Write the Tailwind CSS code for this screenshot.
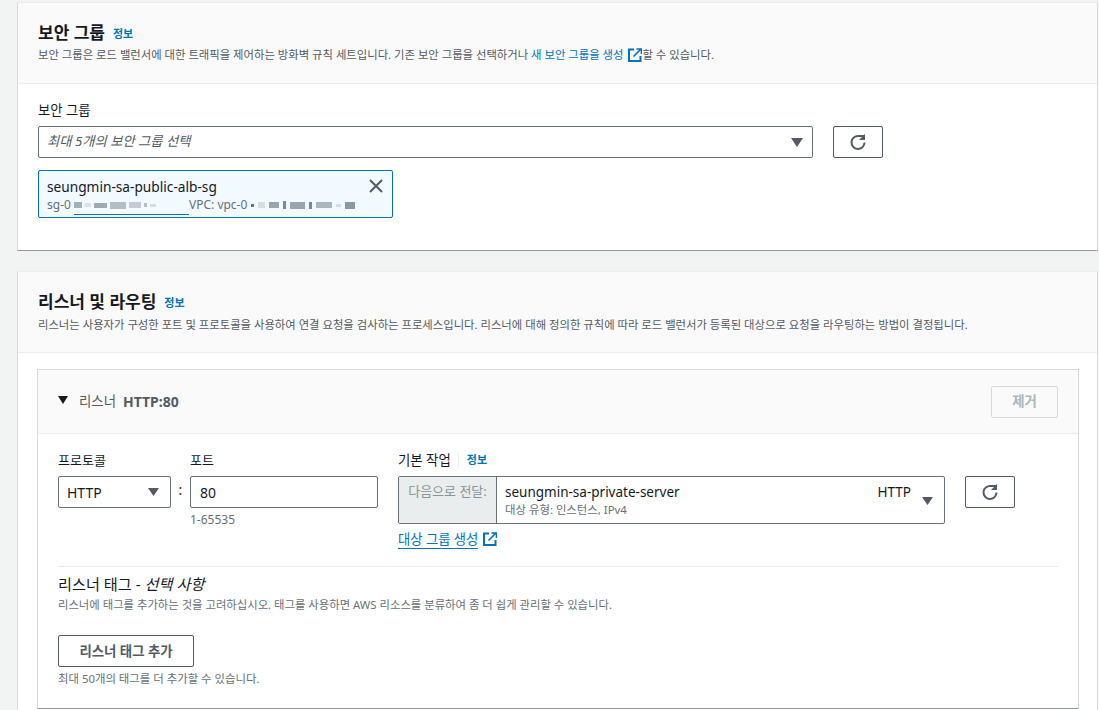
<!DOCTYPE html>
<html lang="ko">
<head>
    <meta charset="UTF-8">
    <title>보안 그룹 - 리스너 및 라우팅</title>
    <script src="https://cdn.jsdelivr.net/npm/@tailwindcss/browser@4"></script>
</head>
<body class="h-[710px] overflow-hidden bg-[#f2f3f3] text-[#16191f] font-['Noto_Sans','Noto_Sans_CJK_KR',sans-serif]">

    <!-- 보안 그룹 -->
    <section class="mt-[2px] ml-[17px] mr-[1px] h-[249px] bg-white border-l border-t border-r border-b border-l-[#d5dbdb] border-r-[#d5dbdb] border-t-[#eaeded] border-b-[#8d9a9b]">
        <div class="h-[81px] bg-[#fafafa] border-b border-[#eaeded] pl-[20px] pt-[15px]">
            <div class="flex items-center h-[30px]">
                <h2 class="text-[17px] leading-[30px] font-bold">보안 그룹</h2>
                <a class="ml-[8px] mt-[2px] text-[11px] font-bold text-[#0073bb]">정보</a>
            </div>
            <p class="text-[11.35px] leading-[18px] text-[#545b64] flex items-center mt-[-2px]">
                보안 그룹은 로드 밸런서에 대한 트래픽을 제어하는 방화벽 규칙 세트입니다. 기존 보안 그룹을 선택하거나&nbsp;<a class="text-[#0073bb]">새 보안 그룹을 생성</a>
                <svg class="ml-[5px] w-[14px] h-[14px]" viewBox="0 0 14 14" fill="none" stroke="#0073bb" stroke-width="2"><path d="M6 1.5H1v11.5h11.5V8"/><path d="M5.5 8.5 12.5 1.5M8.5 1h5v5" stroke-width="1.6"/></svg>
                <span>할 수 있습니다.</span>
            </p>
        </div>
        <div class="pl-[20px] pt-[16px]">
            <label class="block text-[13.3px] leading-[20px]">보안 그룹</label>
            <div class="flex gap-[20px] mt-[6px]">
                <div class="w-[775px] h-[32px] border border-[#687078] rounded-[2px] flex items-center justify-between pl-[8px] pr-[9px]">
                    <span class="text-[13.3px] italic text-[#545b64]">최대 5개의 보안 그룹 선택</span>
                    <svg class="w-[12px] h-[9px]" viewBox="0 0 12 9"><path d="M0 0h12L6 9z" fill="#545b64"/></svg>
                </div>
                <button class="w-[50px] h-[32px] border border-[#545b64] rounded-[2px] flex items-center justify-center">
                    <svg class="w-[18px] h-[18px]" viewBox="0 0 18 18" fill="none" stroke="#545b64" stroke-width="2"><path d="M15.5 9.5A6.5 6.5 0 1 1 10 3h5"/><path d="M16 1v6h-6z" fill="#545b64" stroke="none"/></svg>
                </button>
            </div>
            <div class="relative mt-[12px] w-[355px] h-[48px] bg-[#f1faff] border border-[#0073bb] rounded-[2px] pl-[8px] pt-[6px]">
                <div class="text-[13.7px] leading-[20px]">seungmin-sa-public-alb-sg</div>
                <div class="flex items-center text-[12px] leading-[14px] text-[#687078] mt-[1px]">
                    <span class="w-[27px]">sg-0</span>
                    <span class="flex items-center gap-[3px] w-[115px] h-[8px]">
                        <i class="w-[8px] h-[6px] bg-[#a3b1ba]"></i><i class="w-[6px] h-[4px] bg-[#dbe2e7]"></i><i class="w-[13px] h-[5px] bg-[#9caab3]"></i><i class="w-[16px] h-[7px] bg-[#b2bdc4]"></i><i class="w-[12px] h-[6px] bg-[#c2ccd2]"></i><i class="w-[3px] h-[4px] bg-[#b2bdc4]"></i><i class="w-[6px] h-[3px] bg-[#d5dde2]"></i>
                    </span>
                    <span>VPC: vpc-0</span>
                    <span class="flex items-center gap-[4px] ml-[4px] h-[8px]">
                        <i class="w-[3px] h-[3px] bg-[#687078]"></i><i class="w-[7px] h-[6px] bg-[#d5dde2]"></i><i class="w-[10px] h-[6px] bg-[#98a5ae]"></i><i class="w-[3px] h-[8px] bg-[#7c8a93]"></i><i class="w-[15px] h-[7px] bg-[#98a5ae]"></i><i class="w-[3px] h-[7px] bg-[#7c8a93]"></i><i class="w-[16px] h-[6px] bg-[#aab5bc]"></i><i class="w-[5px] h-[3px] bg-[#d5dde2]"></i><i class="w-[10px] h-[7px] bg-[#8a9aa5]"></i>
                    </span>
                </div>
                <span class="absolute left-[35px] bottom-[2px] w-[115px] h-[1px] bg-[#0073bb]"></span>
                <svg class="absolute right-[9px] top-[8px] w-[14px] h-[14px]" viewBox="0 0 14 14" stroke="#545b64" stroke-width="2"><path d="M1 1l12 12M13 1 1 13"/></svg>
            </div>
        </div>
    </section>

    <!-- 리스너 및 라우팅 -->
    <section class="mt-[20px] ml-[17px] mr-[1px] h-[439px] bg-white border-l border-t border-r border-l-[#d5dbdb] border-r-[#d5dbdb] border-t-[#eaeded]">
        <div class="h-[81px] bg-[#fafafa] border-b border-[#eaeded] pl-[20px] pt-[15px]">
            <div class="flex items-center h-[30px]">
                <h2 class="text-[17px] leading-[30px] font-bold">리스너 및 라우팅</h2>
                <a class="ml-[8px] mt-[2px] text-[11px] font-bold text-[#0073bb]">정보</a>
            </div>
            <p class="text-[11.35px] leading-[18px] text-[#545b64] mt-[-1px]">리스너는 사용자가 구성한 포트 및 프로토콜을 사용하여 연결 요청을 검사하는 프로세스입니다. 리스너에 대해 정의한 규칙에 따라 로드 밸런서가 등록된 대상으로 요청을 라우팅하는 방법이 결정됩니다.</p>
        </div>

        <div class="mt-[16px] ml-[19px] mr-[18px] h-[340px] border border-[#d5dbdb] border-b-[#8d9a9b] rounded-[1px]">
            <div class="h-[64px] bg-[#fafafa] border-b border-[#eaeded] flex items-center justify-between pl-[20px] pr-[20px]">
                <div class="flex items-center">
                    <svg class="w-[10px] h-[8px] mb-[4px]" viewBox="0 0 10 8"><path d="M0 0h10L5 8z" fill="#16191f"/></svg>
                    <span class="ml-[11px] text-[13.4px] text-[#545b64]">리스너</span>
                    <span class="ml-[7px] text-[14px] font-bold text-[#545b64]">HTTP:80</span>
                </div>
                <button class="w-[67px] h-[32px] border border-[#d5dbdb] rounded-[2px] text-[13.4px] font-bold text-[#aab7b8]">제거</button>
            </div>

            <div class="pl-[20px] pr-[20px] pt-[16px]">
                <div class="flex items-start">
                    <div class="w-[113px]">
                        <label class="block text-[13px] leading-[20px]">프로토콜</label>
                        <div class="mt-[6px] h-[32px] border border-[#687078] rounded-[2px] flex items-center justify-between pl-[8px] pr-[11px]">
                            <span class="text-[14px]">HTTP</span>
                            <svg class="w-[11px] h-[8px]" viewBox="0 0 11 8"><path d="M0 0h11L5.5 8z" fill="#545b64"/></svg>
                        </div>
                    </div>
                    <span class="w-[19px] mt-[30px] text-center text-[14px] leading-[20px] text-[#16191f]">:</span>
                    <div class="w-[188px]">
                        <label class="block text-[13px] leading-[20px]">포트</label>
                        <div class="mt-[6px] h-[32px] border border-[#687078] rounded-[2px] flex items-center pl-[9px]">
                            <span class="text-[14px]">80</span>
                        </div>
                        <p class="mt-[4px] text-[12px] leading-[16px] text-[#687078]">1-65535</p>
                    </div>
                    <div class="ml-[20px] w-[547px]">
                        <div class="flex items-center h-[20px]">
                            <label class="text-[13.4px] leading-[20px]">기본 작업</label>
                            <span class="ml-[7px] w-[1px] h-[14px] bg-[#eaeded]"></span>
                            <a class="ml-[8px] text-[11px] font-bold text-[#0073bb]">정보</a>
                        </div>
                        <div class="mt-[6px] h-[48px] flex border border-[#687078] rounded-[2px]">
                            <div class="w-[98px] bg-[#eaeded] border-r border-[#687078] text-[13px] leading-[16px] text-[#879596] pt-[6px] text-center">다음으로 전달:</div>
                            <div class="flex-1 flex justify-between pl-[8px] pr-[11px] pt-[5px]">
                                <div>
                                    <div class="text-[13.5px] leading-[20px]">seungmin-sa-private-server</div>
                                    <div class="text-[11.4px] leading-[16px] text-[#687078]">대상 유형: 인스턴스, IPv4</div>
                                </div>
                                <div class="flex items-start">
                                    <span class="text-[13.5px] leading-[20px]">HTTP</span>
                                    <svg class="ml-[11px] mt-[15px] w-[11px] h-[8px]" viewBox="0 0 11 8"><path d="M0 0h11L5.5 8z" fill="#545b64"/></svg>
                                </div>
                            </div>
                        </div>
                        <div class="flex items-center mt-[6px] h-[18px]">
                            <a class="text-[13.3px] leading-[18px] text-[#0073bb] border-b border-[#0073bb]">대상 그룹 생성</a>
                            <svg class="ml-[5px] w-[14px] h-[14px]" viewBox="0 0 14 14" fill="none" stroke="#0073bb" stroke-width="2"><path d="M6 1.5H1v11.5h11.5V8"/><path d="M5.5 8.5 12.5 1.5M8.5 1h5v5" stroke-width="1.6"/></svg>
                        </div>
                    </div>
                    <button class="ml-[20px] mt-[26px] w-[50px] h-[32px] border border-[#545b64] rounded-[2px] flex items-center justify-center">
                        <svg class="w-[18px] h-[18px]" viewBox="0 0 18 18" fill="none" stroke="#545b64" stroke-width="2"><path d="M15.5 9.5A6.5 6.5 0 1 1 10 3h5"/><path d="M16 1v6h-6z" fill="#545b64" stroke="none"/></svg>
                    </button>
                </div>

                <div class="mt-[18px] border-t border-[#eaeded] pt-[7px]">
                    <h3 class="text-[15.2px] leading-[20px]">리스너 태그 - <em>선택 사항</em></h3>
                    <p class="mt-[3px] text-[11.35px] leading-[16px] text-[#687078]">리스너에 태그를 추가하는 것을 고려하십시오. 태그를 사용하면 AWS 리소스를 분류하여 좀 더 쉽게 관리할 수 있습니다.</p>
                    <button class="mt-[22px] w-[136px] h-[32px] border border-[#545b64] rounded-[2px] text-[13.4px] font-bold text-[#545b64]">리스너 태그 추가</button>
                    <p class="mt-[4px] text-[11.4px] leading-[16px] text-[#687078]">최대 50개의 태그를 더 추가할 수 있습니다.</p>
                </div>
            </div>
        </div>
    </section>
</body>
</html>
